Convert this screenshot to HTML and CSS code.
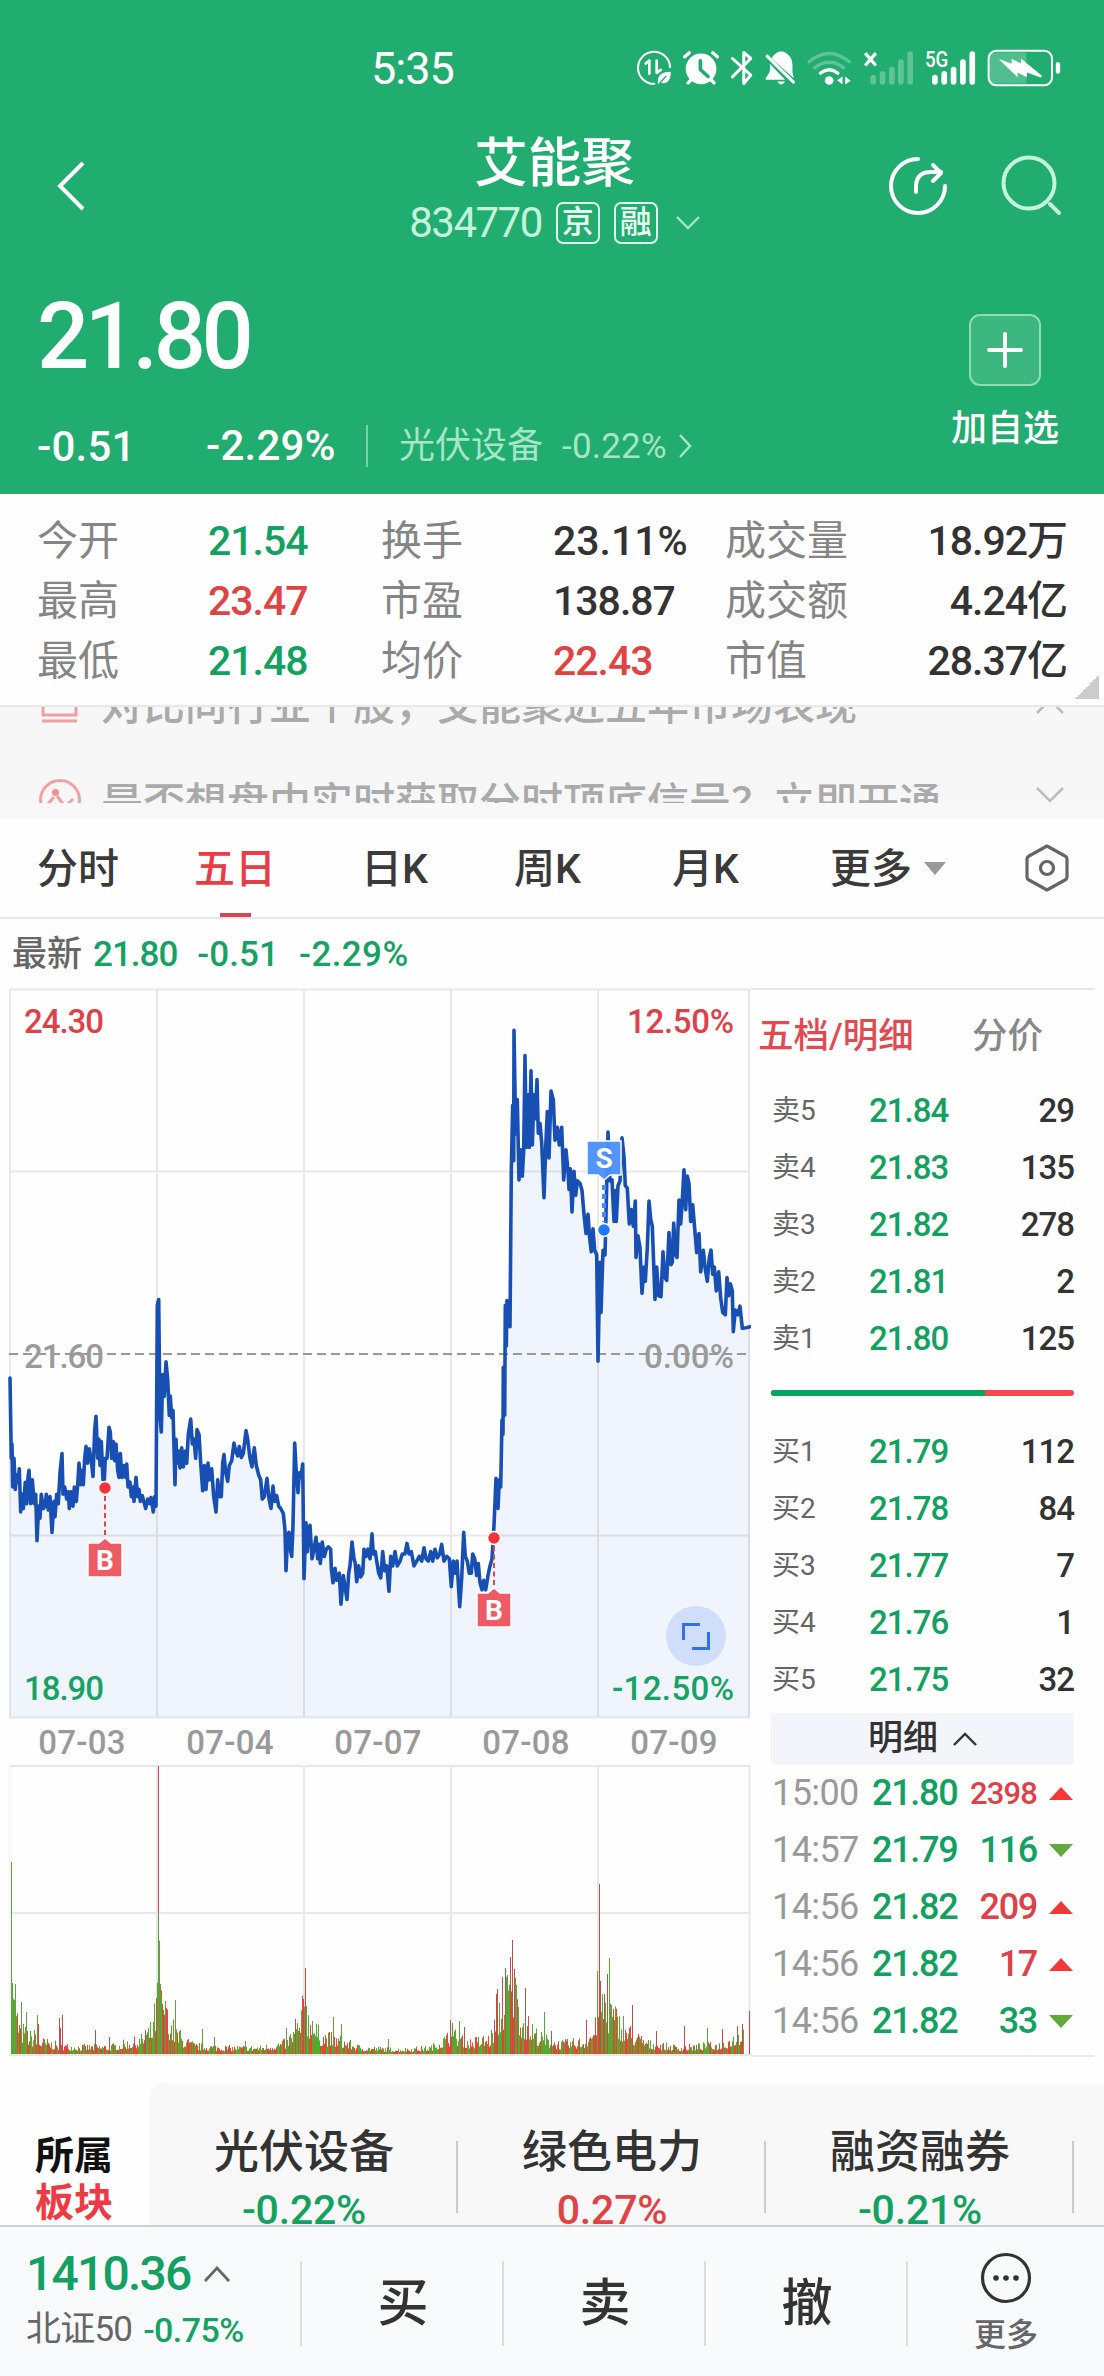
FILE: index.html
```html
<!DOCTYPE html>
<html lang="zh-CN">
<head>
<meta charset="utf-8">
<title>艾能聚 834770</title>
<link rel="stylesheet" href="styles.css">
</head>
<body>
<header class="head">
  <div class="status">
    <span class="clock">5:35</span>
    <svg class="status-icons" viewBox="105 50 1280 125" fill="none" stroke="#fff" stroke-width="6" stroke-linecap="round" stroke-linejoin="round">
      <path d="M163 160a48 48 0 1 1 47-50"/>
      <path d="M137 99l11-9v40M170 90v37l12-9" stroke-width="8"/>
      <path d="M174 162c-3-26 8-38 38-38 1 26-11 38-30 33z" fill="#fff" stroke="none"/>
      <path d="M176 162l22-25" stroke="#21ac70" stroke-width="4"/>
      <circle cx="303" cy="115" r="46" fill="#fff" stroke="none"/>
      <path d="M254 79l14-12M352 79l-14-12M264 157l10-10M342 157l-10-10" stroke-width="10"/>
      <path d="M301 91v26l23 21" stroke="#21ac70" stroke-width="11"/>
      <path d="M397 84l55 50-21 25V66l21 18-55 55" stroke-width="9"/>
      <path d="M515 84c5-13 16-17 22-21h12c18 8 28 20 28 42v20l4 18zM509 100c3 20-1 30-12 42v6h58z" fill="#fff" stroke="none"/>
      <path d="M501 77l79 78" stroke-width="9"/>
      <path d="M531 153h24q-12 18-24 0z" fill="#fff" stroke="none"/>
      <g stroke-width="10"><path d="M627 94q60-50 120 0M643 112q44-33 88 0" opacity=".28"/><path d="M661 128q26-20 52 0"/></g>
      <circle cx="687" cy="150" r="13" fill="#fff" stroke="none"/>
      <path d="M727 138v24l-16-13zM735 162v-24l17 13z" fill="#fff" stroke="none"/>
      <path d="M795 68l32 37M827 68l-32 37" stroke-width="10" stroke-linecap="butt"/>
      <g stroke-width="17"><path d="M819 141v13M847 130v24M875 117v37M902 95v59M930 71v83" opacity=".28"/><path d="M1004 141v13M1032 130v24M1060 117v37M1088 95v59M1116 71v83"/></g>
      <text class="fiveg" x="974" y="111" textLength="70" lengthAdjust="spacingAndGlyphs">5G</text>
      <path d="M1167 82q0-16 17-16h94v93h-94q-17 0-17-16z" fill="#fff" stroke="none" opacity=".22"/>
      <rect x="1165" y="61" width="190" height="103" rx="23"/>
      <path d="M1194 85l40 15v-15l28 14v-15l62 51q2 6-5 5l-39-14v14l-28-14v14z" fill="#fff" stroke="none"/>
      <path d="M1373 101v22" stroke-width="13"/>
    </svg>
  </div>
  <div class="nav">
    <svg class="back" viewBox="0 0 28 50" fill="none" stroke="#fff" stroke-width="4"><path d="M26 2L3 25l23 23"/></svg>
    <div class="name">
      <h1>艾能聚</h1>
      <div class="code"><span class="num">834770</span><i>京</i><i>融</i><svg width="24" height="14" viewBox="0 0 24 14" fill="none" stroke="#a6e5c7" stroke-width="2.4"><path d="M1 1l11 11L23 1"/></svg></div>
    </div>
    <svg class="tools" viewBox="0 0 176 62" fill="none" stroke="#fff" stroke-width="4" stroke-linecap="round" stroke-linejoin="round">
      <path d="M31 4A27 27 0 1 0 58 31M29 37v-5q0-15 15-15h10M46 10l8 8-8 8"/>
      <g stroke="#c5f4dc"><circle cx="142" cy="28" r="25.500"/><path d="M163 49l9 9"/></g>
    </svg>
  </div>
  <div class="quote">
    <div class="quote-main">
      <div class="price">21.80</div>
      <div class="change"><b class="chg">-0.51</b><b class="pct">-2.29%</b><span class="sector">光伏设备</span><span class="sector-pct">-0.22%</span><svg width="13" height="24" viewBox="0 0 13 24" fill="none" stroke="#a6e5c7" stroke-width="2.500"><path d="M1 1l10 11L1 23"/></svg></div>
    </div>
    <div class="add">
      <div class="plus"><svg width="36" height="36" viewBox="0 0 36 36" stroke="#fff" stroke-width="4" stroke-linecap="round"><path d="M18 2v32M2 18h32"/></svg></div>
      <span>加自选</span>
    </div>
  </div>
</header>

<section class="stats">
  <span>今开</span><b class="g">21.54</b><span>换手</span><b class="wide">23.11%</b><span>成交量</span><b>18.92万</b>
  <span>最高</span><b class="r">23.47</b><span>市盈</span><b>138.87</b><span>成交额</span><b>4.24亿</b>
  <span>最低</span><b class="g">21.48</b><span>均价</span><b class="r">22.43</b><span>市值</span><b>28.37亿</b>
</section>

<section class="tips">
  <div class="tip">
    <svg width="40" height="42" viewBox="0 0 40 42" fill="none" stroke="#efa0a3" stroke-width="3"><path d="M4 6v24h33V6M3 36h35"/></svg>
    <span>对比同行业个股，艾能聚近五年市场表现</span>
    <svg width="28" height="16" viewBox="0 0 28 16" fill="none" stroke="#bbb" stroke-width="2.500"><path d="M1 15L14 2l13 13"/></svg>
  </div>
  <div class="tip">
    <svg width="42" height="42" viewBox="0 0 42 42" fill="none" stroke="#efa0a3" stroke-width="3"><circle cx="21" cy="21" r="19.500"/><path d="M9 25l6-7M18 17l6 8M29 25l5-5"/><circle cx="16.500" cy="13.500" r="3.500" fill="#ec9094" stroke="none"/></svg>
    <span>是否想盘中实时获取分时顶底信号？立即开通</span>
    <svg width="28" height="16" viewBox="0 0 28 16" fill="none" stroke="#bbb" stroke-width="2.500"><path d="M1 1l13 13L27 1"/></svg>
  </div>
</section>

<nav class="tabs">
  <span>分时</span><span class="on">五日</span><span>日K</span><span>周K</span><span>月K</span><span class="more">更多<i></i></span>
  <svg width="44" height="48" viewBox="0 0 44 48" fill="none" stroke="#666" stroke-width="3.200" stroke-linejoin="round"><path d="M22 2l18 10q2 1 2 3v18q0 2-2 3L22 46 4 36q-2-1-2-3V15q0-2 2-3z"/><circle cx="22" cy="24" r="6.500"/></svg>
</nav>

<div class="latest"><span>最新</span><b>21.80</b><b>-0.51</b><b>-2.29%</b></div>

<main class="market">
  <div class="charts">
    <svg class="price-chart" width="751" height="731" viewBox="0 988 751 731">
      <path id="area" fill="#eff4fd"/>
      <path class="grid" d="M9 989.500H750M10 1171.500H750M10 1535.500H750M9 1717.500H750M10 989V1718M157 989V1718M304 989V1718M451 989V1718M598 989V1718M749 989V1718"/>
      <g class="axis">
        <text x="24" y="1033" fill="#dc4248" textLength="80">24.30</text>
        <text x="627" y="1033" fill="#dc4248" textLength="107">12.50%</text>
        <text x="24" y="1368" fill="#9a9a9a" textLength="80">21.60</text>
        <text x="644" y="1368" fill="#9a9a9a" textLength="90">0.00%</text>
        <text x="24" y="1700" fill="#16a263" textLength="80">18.90</text>
        <text x="612" y="1700" fill="#16a263" textLength="122">-12.50%</text>
      </g>
      <path d="M9 1354H750" stroke="#999" stroke-width="2" stroke-dasharray="9 5"/>
      <path id="line" fill="none" stroke="#184fb3" stroke-width="3.600" stroke-linejoin="round" stroke-linecap="round"/>
      <g fill="#ee5b64" stroke="#fff" stroke-width="1.500">
        <path d="M105 1496V1540M494 1546V1592" stroke="#e2434d" stroke-width="2" stroke-dasharray="5 3.500"/>
        <circle cx="105" cy="1488" r="6.500" fill="#f5323c"/><circle cx="494" cy="1538" r="6.500" fill="#f5323c"/>
        <path d="M88 1543h11l6-5 6 5h11v34H88zM477 1593h11l6-5 6 5h11v34h-34z"/>
      </g>
      <path d="M604 1185V1222" stroke="#4a8cf5" stroke-width="4" stroke-dasharray="5 4"/>
      <circle cx="604" cy="1230" r="6.500" fill="#1f78f5" stroke="#fff" stroke-width="1.500"/>
      <path d="M587 1141h34v34h-11l-6 5-6-5h-11z" fill="#4a8ffb" fill-opacity=".95" stroke="#fff" stroke-width="1.500"/>
      <g class="flag"><text x="105" y="1570">B</text><text x="494" y="1620">B</text><text x="604" y="1168">S</text></g>
      <circle cx="696" cy="1636" r="30" fill="#d0defb"/>
      <path d="M683.500 1640V1624.500H700M692 1648.500H708.500V1632" fill="none" stroke="#2f73ea" stroke-width="3"/>
    </svg>
    <div class="dates"><span>07-03</span><span>07-04</span><span>07-07</span><span>07-08</span><span>07-09</span></div>
    <svg class="vol-chart" width="751" height="292" viewBox="0 1765 751 292">
      <path class="grid" d="M9 1766H750M9 1913H750M157 1766V2054M304 1766V2054M451 1766V2054M598 1766V2054M749.500 1766V2054"/>
      <path d="M9.500 1766V2054" stroke="#f3f3f3"/>
      <g id="vol"></g>
      <path class="grid" d="M9 2055H751"/>
    </svg>
  </div>
  <aside class="book">
    <div class="book-tabs"><span>五档/明细</span><span>分价</span></div>
    <ul class="levels">
      <li><span>卖5</span><b>21.84</b><em>29</em></li>
      <li><span>卖4</span><b>21.83</b><em>135</em></li>
      <li><span>卖3</span><b>21.82</b><em>278</em></li>
      <li><span>卖2</span><b>21.81</b><em>2</em></li>
      <li><span>卖1</span><b>21.80</b><em>125</em></li>
    </ul>
    <div class="ratio"><i></i></div>
    <ul class="levels">
      <li><span>买1</span><b>21.79</b><em>112</em></li>
      <li><span>买2</span><b>21.78</b><em>84</em></li>
      <li><span>买3</span><b>21.77</b><em>7</em></li>
      <li><span>买4</span><b>21.76</b><em>1</em></li>
      <li><span>买5</span><b>21.75</b><em>32</em></li>
    </ul>
    <div class="detail">明细<svg width="24" height="14" viewBox="0 0 24 14" fill="none" stroke="#333" stroke-width="2.400"><path d="M1 13L12 2l11 11"/></svg></div>
    <ul class="trades">
      <li class="up"><span>15:00</span><b>21.80</b><em class="small">2398</em><i></i></li>
      <li class="down"><span>14:57</span><b>21.79</b><em>116</em><i></i></li>
      <li class="up"><span>14:56</span><b>21.82</b><em>209</em><i></i></li>
      <li class="up"><span>14:56</span><b>21.82</b><em>17</em><i></i></li>
      <li class="down"><span>14:56</span><b>21.82</b><em>33</em><i></i></li>
    </ul>
  </aside>
</main>

<section class="sectors">
  <h2>所属<br><em>板块</em></h2>
  <div class="sector-list">
    <div><span>光伏设备</span><b class="g">-0.22%</b></div>
    <div><span>绿色电力</span><b class="r">0.27%</b></div>
    <div><span>融资融券</span><b class="g">-0.21%</b></div>
  </div>
</section>

<footer class="bar">
  <div class="index">
    <div class="index-top"><b>1410.36</b><svg width="26" height="16" viewBox="0 0 26 16" fill="none" stroke="#666" stroke-width="2.800"><path d="M1 15L13 2l12 13"/></svg></div>
    <div class="index-sub"><span>北证50</span><b>-0.75%</b></div>
  </div>
  <div class="act">买</div><div class="act">卖</div><div class="act">撤</div>
  <div class="act more-act">
    <svg width="52" height="52" viewBox="0 0 52 52" fill="#333"><circle cx="26" cy="26" r="23.500" fill="none" stroke="#333" stroke-width="3.200"/><circle cx="16" cy="26" r="2.800"/><circle cx="26" cy="26" r="2.800"/><circle cx="36" cy="26" r="2.800"/></svg>
    <span>更多</span>
  </div>
</footer>
<script src="chart.js"></script>
</body>
</html>
```
FILE: styles.css
```css
* { box-sizing: border-box; margin: 0; padding: 0; }
body { width: 1104px; height: 2376px; background: #fefefe; color: #333; font-family: Roboto, "Noto Sans CJK SC", sans-serif; font-weight: 500; overflow: hidden; }
b { font-weight: 500; }
i, em { font-style: normal; }
ul { list-style: none; }
svg { display: block; flex: none; }
.g { color: #12a160; }
.r { color: #e04343; }

.head { height: 494px; background: #21ac70; color: #fff; }
.status { height: 124px; padding: 47px 42px 0 371px; display: flex; justify-content: space-between; }
.clock { font-size: 45px; line-height: 44px; font-weight: 400; letter-spacing: -1px; }
.status-icons { width: 427px; height: 42px; }
.fiveg { font: 500 64px Roboto; fill: #fff; stroke: none; }
.nav { height: 138px; padding: 0 41px 0 57px; display: flex; justify-content: space-between; }
.back { width: 28px; height: 50px; margin-top: 37px; }
.tools { width: 176px; height: 62px; margin-top: 31px; }
.name { width: 300px; margin-left: 137px; padding-top: 2px; display: flex; flex-direction: column; align-items: center; }
.name h1 { width: 170px; font-size: 53.5px; line-height: 75px; font-weight: 500; text-align: center; }
.code { display: flex; align-items: center; gap: 14px; height: 44px; color: #c5f4dc; font-size: 42px; line-height: 44px; font-weight: 400; }
.code .num { letter-spacing: -1.5px; }
.code i { width: 44px; height: 42px; border: 2px solid #e0faec; border-radius: 7px; color: #e9fff4; font-size: 32px; line-height: 37px; font-weight: 500; text-align: center; }
.code svg { margin-left: 4px; }
.quote { display: flex; justify-content: space-between; padding: 0 45px 0 37px; }
.price { padding-top: 27px; font-size: 92px; line-height: 96px; font-weight: 500; letter-spacing: -4.5px; }
.change { display: flex; align-items: center; margin-top: 39px; height: 44px; font-size: 42px; letter-spacing: .2px; font-weight: 400; }
.chg { width: 169px; }
.pct { width: 162px; border-right: 2px solid #7fd0aa; line-height: 42px; }
.sector { margin-left: 31px; font-size: 36px; letter-spacing: 0; color: #a6e5c7; line-height: 44px; }
.sector-pct { margin-left: 19px; margin-right: 12px; font-size: 35px; color: #a6e5c7; }
.add { width: 108px; padding-top: 52px; display: flex; flex-direction: column; align-items: center; font-size: 36px; line-height: 40px; font-weight: 500; }
.plus { width: 72px; height: 72px; border: 2px solid #8fdcb7; border-radius: 11px; background: #3bb77f; display: grid; place-items: center; margin-bottom: 23px; }

.stats { height: 213px; padding: 17px 37px 0; border-bottom: 2px solid #e9e9e9; display: grid; grid-template-columns: 171px 173px 172px 172px 160px 1fr; grid-auto-rows: 60px; align-items: center; font-size: 41px; line-height: 60px; white-space: nowrap;
  background: linear-gradient(135deg, transparent 50%, #ccc 50%) 1075px 181px / 24px 24px no-repeat; }
.stats span { color: #858585; font-weight: 400; }
.stats b { letter-spacing: -1px; }
.stats .wide { letter-spacing: 0; }
.stats b:nth-child(6n) { text-align: right; }

.tips { height: 111px; padding-bottom: 15px; background: #f7f7f7; overflow: hidden; position: relative; display: flex; flex-direction: column; }
.tip { height: 60px; flex: none; display: grid; grid-template-columns: 62px 1fr 28px; align-items: center; padding: 0 40px 0 39px; color: #aaa; font-size: 42px; line-height: 60px; white-space: nowrap; }
.tip:first-child { margin-top: -31px; }
.tip:last-child { align-items: start; margin-top: 38px; }
.tip:last-child svg { margin-top: 5px; }
.tip:last-child svg:last-child { margin-top: 13px; }
.tips::after { content: ""; position: absolute; left: 0; right: 0; bottom: 0; height: 15px; background: #f8f8f8; }

.tabs { height: 101px; padding: 3px 35px 0 37px; border-bottom: 2px solid #e8e8e8; display: grid; grid-template-columns: 157px 167px 153px 158px 158px 1fr 44px; align-items: center; font-size: 41px; line-height: 96px; color: #3a3a3a; }
.tabs svg { margin-top: -3px; }
.tabs .on { color: #e83c46; background: linear-gradient(#dc4550, #dc4550) 26px 92px / 31px 4px no-repeat; height: 96px; }
.more { display: flex; align-items: center; }
.more i { margin-left: 12px; margin-top: -1px; border: 11px solid transparent; border-top: 13px solid #999; border-bottom: 0; }

.latest { height: 69px; padding: 2px 0 0 12px; display: flex; line-height: 67px; font-size: 35px; color: #16a263; }
.latest span { color: #666; margin-right: 11px; }
.latest b { font-weight: 500; margin-right: 20px; letter-spacing: -1px; }
.latest b + b { letter-spacing: .1px; }
.latest b + b + b { letter-spacing: .4px; }

.market { height: 1069px; display: flex; }
.charts { width: 751px; }
.grid { stroke: rgba(0,0,0,.085); stroke-width: 2; fill: none; }
.axis text { font: 500 33px Roboto; }
.flag text { font: 700 28px Roboto; fill: #fff; text-anchor: middle; }
.dates { height: 46px; padding-left: 8px; display: grid; grid-template-columns: repeat(5, 148px); text-align: center; color: #999; font-size: 33px; line-height: 47px; letter-spacing: .3px; }
.book { width: 344px; border-top: 2px solid #e8e8e8; border-bottom: 2px solid #e8e8e8; padding: 0 21px 0 20px; }
.book-tabs { display: flex; margin-left: -13px; height: 92px; line-height: 93px; font-size: 35.5px; color: #888; }
.book-tabs span:first-child { color: #e04a50; width: 214px; }
.levels li { display: grid; grid-template-columns: 97px 1fr auto; height: 57px; line-height: 57px; font-size: 33px; padding-left: 1px; letter-spacing: -1px; }
.levels span { font-size: 28px; color: #666; font-weight: 400; letter-spacing: 0; }
.levels b, .trades b { color: #12a160; }
.ratio { height: 6px; border-radius: 3px; background: #f4484b; margin: 23px 0 27px; overflow: hidden; }
.ratio i { display: block; width: 214px; height: 6px; background: #06a65f; }
.detail { height: 51px; margin-top: 5px; background: #f3f5fa; display: flex; justify-content: center; align-items: center; gap: 15px; font-size: 35px; line-height: 52px; padding-top: 1px; }
.trades li { display: grid; grid-template-columns: 100px 1fr auto 37px; height: 57px; line-height: 59px; font-size: 36px; align-items: center; letter-spacing: -1.3px; padding-left: 1px; }
.trades span { color: #999; font-weight: 400; letter-spacing: -.6px; }
.trades .small { font-size: 31px; letter-spacing: -.9px; }
.trades i { margin-left: 12px; border: 12px solid transparent; width: 0; }
.up em { color: #dc4248; }
.down em { color: #12a160; }
.up i { border-bottom: 13px solid #f43838; border-top: 0; }
.trades .down i { border-top: 13px solid #62a83c; border-bottom: 0; }

.sectors { height: 168px; padding-top: 26px; display: flex; overflow: hidden; }
.sectors h2 { width: 150px; padding: 50px 0 0 35px; font-size: 39px; line-height: 47px; font-weight: 700; color: #111; }
.sectors h2 em { color: #ec3b44; }
.sector-list { flex: 1; background: #f8f8f8; border-top-left-radius: 15px; display: flex; overflow: hidden; }
.sector-list div { width: 308px; flex: none; display: flex; flex-direction: column; align-items: center; background: linear-gradient(#ccc, #ccc) right 58px / 2px 72px no-repeat; }
.sector-list span { font-size: 45px; line-height: 60px; margin-top: 40px; }
.sector-list b { font-size: 41px; line-height: 54px; letter-spacing: -.2px; }

.bar { height: 152px; background: #f9fafc; border-top: 2px solid #ccd0d3; display: flex; }
.index { width: 302px; padding: 19px 0 0 26px; background: linear-gradient(#ddd, #ddd) right 34px / 2px 85px no-repeat; white-space: nowrap; }
.index-top { display: flex; align-items: center; gap: 14px; font-size: 48px; line-height: 56px; letter-spacing: -1.8px; color: #12a160; }
.index-sub { display: flex; gap: 11px; font-size: 35px; line-height: 56px; color: #666; }
.index-sub span { letter-spacing: -.8px; font-weight: 400; }
.index-sub b { color: #16a263; font-size: 34px; letter-spacing: -.6px; }
.act { width: 202px; font-size: 51px; line-height: 154px; text-align: center; background: linear-gradient(#ddd, #ddd) right 34px / 2px 85px no-repeat; }
.more-act { width: 196px; background: none; display: flex; flex-direction: column; align-items: center; padding-top: 25px; font-size: 32px; line-height: 48px; color: #666; }
.more-act span { margin-top: 7px; }
```
FILE: chart.js
```js
// Minute prices over five sessions: x in thirds of a pixel, y in plot units.
const first = "30,832 34,1000 36,970 38,1060 42,1000 46,1065 50,1035 54,1050 58,1022 62,1112 66,1075 70,1105 76,1050 80,1095 84,1040 87,1025 92,1095 97,1045 103,1095 107,1075 111,1172 116,1100 120,1125 124,1075 130,1105 136,1100 139,1075 145,1108 150,1080 156,1155 162,1090 165,1122 170,1075 175,1095 180,1030 186,990 189,1075 194,1060 200,1085 205,1070 208,1105 213,1070 219,1100 223,1060 229,1090 233,1055 237,1010 242,1055 246,1025 250,1055 254,1000 258,975 263,1010 268,980 274,1005 279,1038 284,940 288,912 293,1000 297,960 300,1015 304,965 309,1045 313,1045 316,1000 321,1000 327,935 331,945 335,1000 340,965 344,1005 348,970 353,1025 357,1040 361,990 366,1040 372,1015 377,1040 380,1012 384,1060 390,1050 394,1080 399,1060 402,1090 408,1040 413,1080 417,1065 421,1090 427,1078 432,1092 437,1105 443,1085 449,1095 453,1082 460,1112 464,1080 468,1100 472,680 476,668 480,915 484,945 488,825 493,870 498,798 503,835 508,910 511,870 515,915 519,900 525,1055 528,960 531,1010 536,985 540,1020 545,978 550,1018 556,985 560,1010 565,950 572,918 577,970 582,960 587,1000 591,940 597,950 602,1010 608,1068 613,1015 618,1065 624,1010 629,1045 635,1022 641,1080 648,1112 653,1045 659,1080 664,1080 668,1010 672,992 677,1030 683,1048 688,1015 695,1005 702,968 707,985 713,995 718,975 724,998 730,990 738,942 743,960 750,1000 756,1018 763,978 769,1015 776,1035 782,1045 787,1085 793,1080 801,1042 807,1085 813,1105 819,1058 824,1090 830,1078 836,1100 842,1105 850,1115 855,1150 858,1235 863,1160 867,1155 871,1190 875,1205 879,1140 884,968 889,1030 894,1072 898,1030 903,1040 908,1012 912,1252 918,1135 922,1195 926,1145 930,1140 936,1210 942,1190 948,1165 953,1210 957,1180 961,1220 967,1175 973,1205 979,1190 985,1185 992,1190 994,1230 999,1260 1005,1230 1010,1255 1018,1240 1023,1305 1030,1245 1034,1265 1041,1295 1046,1240 1050,1225 1056,1175 1062,1210 1066,1220 1070,1258 1076,1225 1082,1248 1088,1240 1092,1190 1098,1205 1104,1190 1110,1210";
const second = "6,1158 10,1200 16,1195 20,1215 26,1240 32,1250 38,1195 44,1235 50,1225 57,1278 62,1205 68,1225 75,1195 82,1225 90,1215 97,1200 105,1200 111,1178 117,1200 124,1195 132,1225 140,1215 148,1205 155,1215 162,1187 168,1210 175,1215 182,1195 188,1215 195,1190 202,1208 209,1200 215,1180 222,1215 230,1205 238,1210 244,1268 250,1215 256,1240 261,1215 269,1310 275,1250 281,1155 286,1205 292,1215 298,1240 304,1240 308,1200 314,1210 320,1245 325,1220 330,1260 336,1275 341,1255 347,1275 354,1245 360,1225 366,1210 372,1140 378,1042 384,1105 388,1045 392,1060 396,920 399,950 400,810 404,910 406,680 409,765 411,670 416,690 420,725 424,400 428,262 431,378 432,105 437,322 442,250 447,418 452,355 457,410 461,355 465,158 469,350 474,240 478,350 483,190 487,345 492,240 496,290 501,208 505,320 510,300 515,340 522,455 527,350 532,275 537,372 543,232 550,250 555,335 562,308 568,345 575,308 581,418 588,355 594,400 597,438 601,395 606,485 612,400 617,450 622,420 630,425 636,440 642,490 648,530 654,490 659,540 664,568 669,520 674,565 680,575 684,797 690,590 693,695 699,565 705,575 710,430 714,318 720,420 726,418 732,505 737,440 739,505 744,430 750,420 756,330 762,370 766,430 772,435 778,510 784,480 790,515 796,462 798,580 804,535 810,560 816,655 822,600 826,630 832,560 837,462 842,500 847,515 855,668 860,600 866,660 873,662 879,568 884,620 890,628 897,528 903,595 907,590 911,508 917,575 921,580 927,460 932,510 937,460 942,397 947,480 952,410 957,425 962,505 968,470 974,520 980,570 987,530 992,610 1000,565 1006,605 1012,630 1018,580 1023,565 1028,615 1033,600 1039,650 1046,610 1052,665 1058,695 1066,700 1071,622 1076,660 1081,635 1087,650 1090,735 1096,690 1103,700 1110,682 1117,728 1128,727 1140,725";
const toPoints = (text, shift) => text.split(" ").map(p => {
  const [x, y] = p.split(",").map(Number);
  return [(x / 3 + shift).toFixed(1), (980 + y / 2.0907).toFixed(1)].join(" ");
});
const d = "M" + toPoints(first, 0).concat(toPoints(second, 370)).join("L");
document.getElementById("line").setAttribute("d", d);
document.getElementById("area").setAttribute("d", d + "V1717H10Z");

// Volume: a noisy floor that follows the session profile, plus the single large prints.
const profile = [[11,70],[15,45],[20,28],[28,20],[40,14],[60,9],[80,8],[110,8],[140,15],[152,28],[157,60],[162,55],[168,36],[180,17],[195,9],[230,7],[260,7],[285,12],[300,32],[304,60],[308,38],[320,20],[340,15],[360,7],[400,5],[430,7],[447,18],[455,20],[470,13],[490,17],[500,50],[512,80],[520,42],[530,28],[540,18],[560,11],[585,14],[597,32],[602,55],[610,48],[620,33],[635,19],[650,11],[680,7],[700,9],[720,10],[744,24]];
const prints = "24,486,g 26,849,g 32,852,g 30,900,g 44,906,g 55,936,g 71,990,g 77,945,g 79,972,r 123,954,r 125,984,r 129,945,r 197,990,r 225,1011,r 300,990,r 327,198,r 327,640,g 329,722,g 331,852,g 333,890,g 337,930,r 343,924,r 362,900,g 372,990,g 418,987,g 443,1011,g 507,1023,g 591,984,g 610,957,r 627,897,r 630,804,r 632,918,g 645,963,g 688,951,g 705,972,g 802,1017,g 929,960,r 934,969,g 948,963,g 958,981,r 1020,960,r 1024,882,r 1026,867,r 1037,831,r 1043,804,r 1046,825,g 1054,771,r 1057,720,r 1061,807,r 1064,834,g 1070,921,g 1084,864,r 1099,972,g 1123,936,g 1138,993,r 1210,960,r 1233,813,g 1237,552,r 1239,843,r 1247,882,r 1253,822,r 1257,774,g 1260,912,g 1286,948,g 1305,915,r 1354,993,r 1412,978,r 1460,984,g 1491,987,r 1521,978,r 1532,972,r 1546,933,r";
let seed = 7;
const rand = () => (seed = (seed * 16807) % 2147483647) / 2147483647;
const paths = { r: "", g: "" };
let k = 0;
for (let x = 11; x < 744; x++) {
  while (profile[k + 1][0] < x) k++;
  const [x0, h0] = profile[k], [x1, h1] = profile[k + 1];
  const top = h0 + (h1 - h0) * (x - x0) / (x1 - x0);
  const h = Math.max(2, top * (0.4 + 0.9 * rand() ** 1.5));
  paths[rand() < 0.5 ? "r" : "g"] += `M${x}.5 2054v${-h.toFixed(1)}`;
}
const vol = document.getElementById("vol");
const add = (path, color) => {
  const el = document.createElementNS("http://www.w3.org/2000/svg", "path");
  el.setAttribute("d", path);
  el.setAttribute("stroke", color);
  vol.append(el);
};
const tone = { r: "#e8453a", g: "#55aa2c" };
const thin = { r: "#bd5148", g: "#5ba43c" };
add(paths.r, tone.r);
add(paths.g, tone.g);
prints.split(" ").forEach(p => {
  const [x, y, c] = p.split(",");
  add(`M${Math.floor(x / 2.063)}.5 2054V${1700 + y / 3}`, thin[c]);
});
```
